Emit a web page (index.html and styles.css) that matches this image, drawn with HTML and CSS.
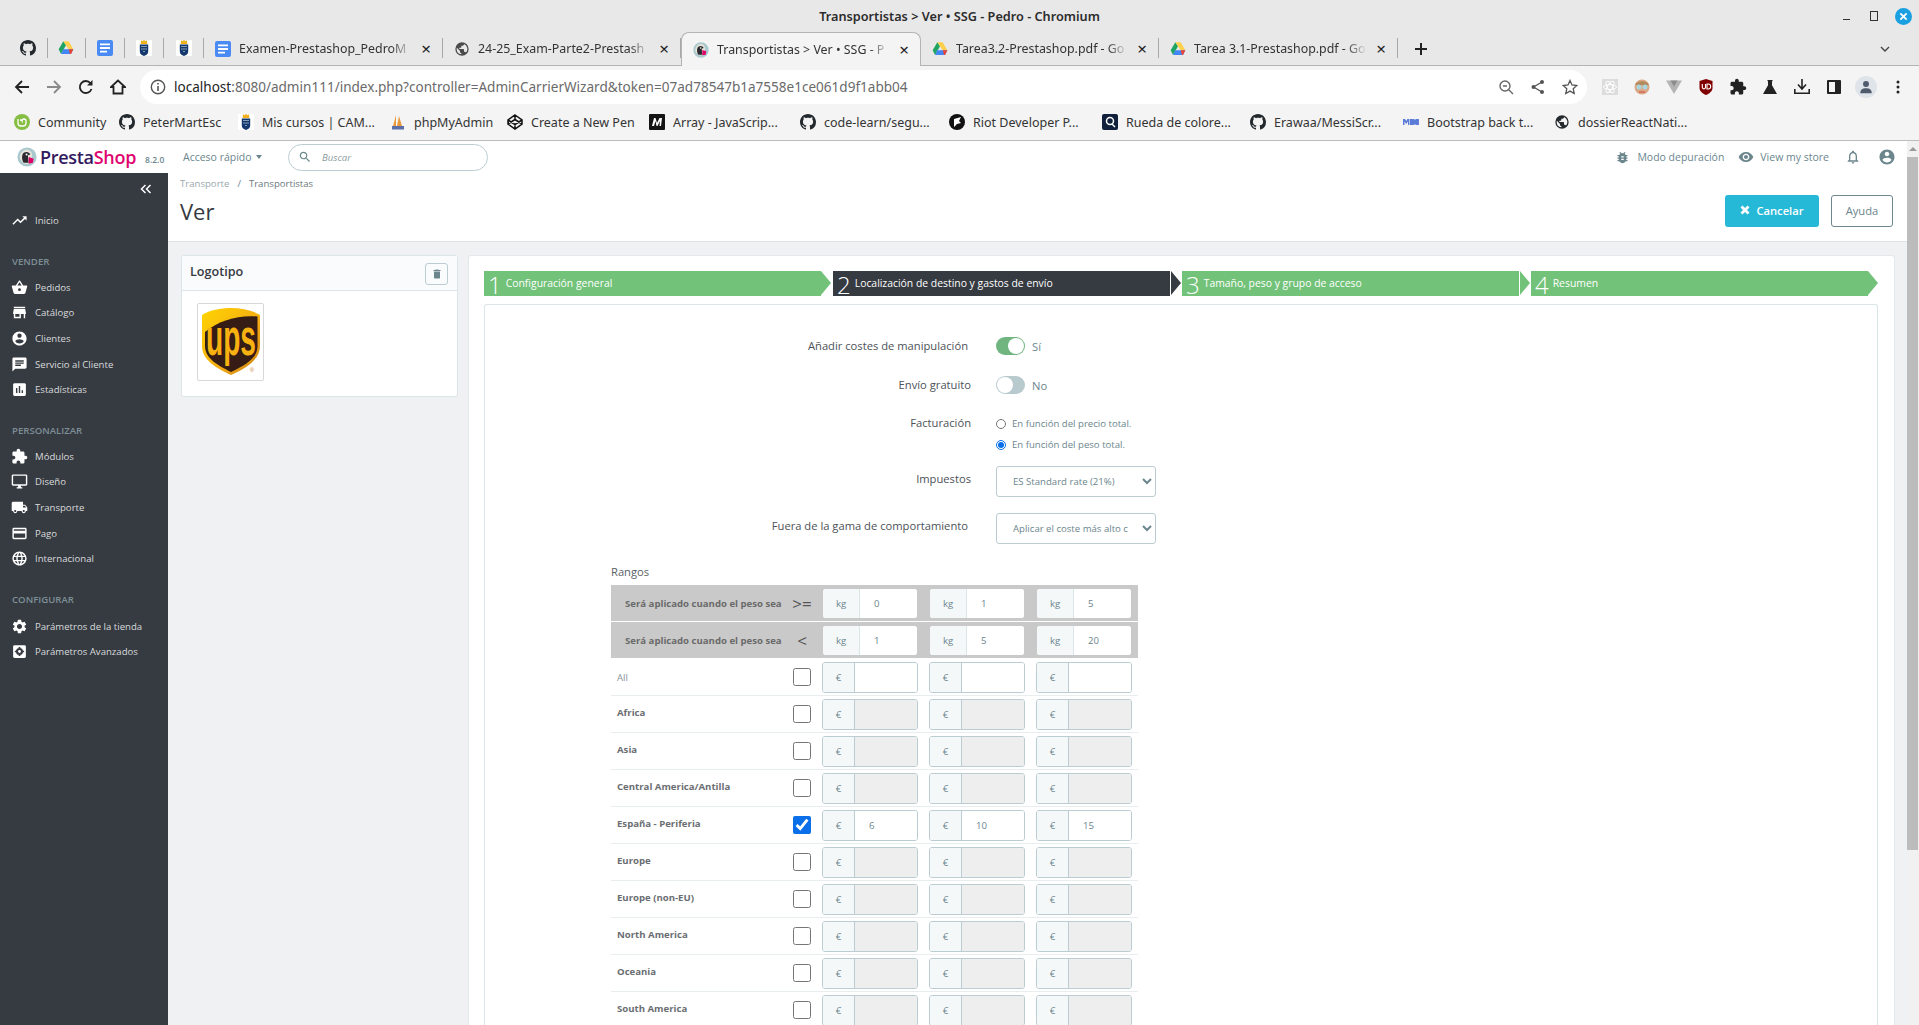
FILE: index.html
```html
<!DOCTYPE html>
<html lang="es">
<head>
    <meta charset="UTF-8">
    <title>Transportistas &gt; Ver • SSG - Pedro - Chromium</title>
    <link rel="stylesheet" href="styles.css">
</head>
<body>

<svg class="defs" xmlns="http://www.w3.org/2000/svg">
    <symbol id="i-github" viewBox="0 0 16 16"><path fill="currentColor" d="M8 0C3.58 0 0 3.58 0 8c0 3.54 2.29 6.53 5.47 7.59.4.07.55-.17.55-.38 0-.19-.01-.82-.01-1.49-2.01.37-2.53-.49-2.69-.94-.09-.23-.48-.94-.82-1.13-.28-.15-.68-.52-.01-.53.63-.01 1.08.58 1.23.82.72 1.21 1.87.87 2.33.66.07-.52.28-.87.51-1.07-1.78-.2-3.64-.89-3.64-3.95 0-.87.31-1.59.82-2.15-.08-.2-.36-1.02.08-2.12 0 0 .67-.21 2.2.82.64-.18 1.32-.27 2-.27.68 0 1.36.09 2 .27 1.53-1.04 2.2-.82 2.2-.82.44 1.1.16 1.92.08 2.12.51.56.82 1.27.82 2.15 0 3.07-1.87 3.75-3.65 3.95.29.25.54.73.54 1.48 0 1.07-.01 1.93-.01 2.2 0 .21.15.46.55.38A8.013 8.013 0 0016 8c0-4.42-3.58-8-8-8z"/></symbol>
    <symbol id="i-drive" viewBox="0 0 24 22"><polygon fill="#1fa463" points="8,1 1,13 4.5,20 12,7"/><polygon fill="#ffd04b" points="8,1 16,1 23,13 16,13"/><polygon fill="#4285f4" points="8,13 23,13 19.5,20 4.5,20"/><polygon fill="#ea4335" points="19.5,20 23,13 16,13 18,20"/></symbol>
    <symbol id="i-docs" viewBox="0 0 16 16"><rect width="16" height="16" rx="2" fill="#4a8af4"/><path fill="#fff" d="M3 3.5h10v1.8H3zM3 7.1h10v1.8H3zM3 10.7h7v1.8H3z"/></symbol>
    <symbol id="i-crest" viewBox="0 0 16 16"><rect width="16" height="16" fill="#fff"/><path fill="#f2b01e" d="M5 0l1.2 1.2L8 0l1.8 1.2L11 0l.3 4H4.700z"/><path fill="#12386e" d="M3.800 4.500h8.400v7c0 2.500-2 3.800-4.200 4.500-2.200-.7-4.200-2-4.200-4.500z"/><path fill="#fff" d="M5.500 6h1v1h-1zM7.500 6h1v1h-1zM9.500 6h1v1h-1zM5.500 8.500h1v1h-1zM7.500 8.500h1v1h-1zM9.500 8.500h1v1h-1zM7.500 11h1v1h-1z"/></symbol>
    <symbol id="i-globe" viewBox="0 0 24 24"><path fill="currentColor" d="M12 2a10 10 0 100 20 10 10 0 000-20zm-1 17.900A8 8 0 014 12c0-.6.100-1.200.200-1.800L9 15v1c0 1.100.9 2 2 2v1.900zm6.900-2.500c-.3-.8-1-1.400-1.900-1.400h-1v-3c0-.6-.4-1-1-1H8v-2h2c.6 0 1-.4 1-1V7h2c1.100 0 2-.9 2-2v-.4a8 8 0 012.900 12.800z"/></symbol>
    <symbol id="i-presta" viewBox="0 0 24 24"><circle cx="12" cy="12" r="11.500" fill="#a9c9cf"/><path fill="#e9e4da" d="M12 3a9 9 0 00-8 12l4 5h8l2-9a7 7 0 00-6-8z"/><path fill="#2a2a30" d="M8 7c3-2 7-1 8 2l-3 1 1 9H8c-2-3-3-9 0-12z"/><path fill="#df0067" d="M14 12l6 2-1 5-5 1z"/><circle cx="11.500" cy="9" r="1.200" fill="#fff"/></symbol>
    <symbol id="m-trend" viewBox="0 0 24 24"><path fill="currentColor" d="M16 6l2.290 2.290-4.880 4.880-4-4L2 16.590 3.410 18l6-6 4 4 6.300-6.290L22 12V6z"/></symbol>
    <symbol id="m-basket" viewBox="0 0 24 24"><path fill="currentColor" d="M17.210 9l-4.380-6.560c-.19-.28-.51-.42-.83-.42-.32 0-.64.14-.83.43L6.790 9H2c-.55 0-1 .45-1 1 0 .09.01.18.04.27l2.540 9.270c.23.84 1 1.460 1.920 1.460h13c.92 0 1.690-.62 1.930-1.460l2.540-9.270L23 10c0-.55-.45-1-1-1h-4.790zM9 9l3-4.400L15 9H9zm3 8c-1.100 0-2-.9-2-2s.9-2 2-2 2 .9 2 2-.9 2-2 2z"/></symbol>
    <symbol id="m-store" viewBox="0 0 24 24"><path fill="currentColor" d="M20 4H4v2h16V4zm1 10v-2l-1-5H4l-1 5v2h1v6h10v-6h4v6h2v-6h1zm-9 4H6v-4h6v4z"/></symbol>
    <symbol id="m-account" viewBox="0 0 24 24"><path fill="currentColor" d="M12 2C6.480 2 2 6.480 2 12s4.480 10 10 10 10-4.480 10-10S17.520 2 12 2zm0 3c1.660 0 3 1.340 3 3s-1.340 3-3 3-3-1.340-3-3 1.340-3 3-3zm0 14.200c-2.500 0-4.710-1.280-6-3.220.03-1.990 4-3.080 6-3.080 1.990 0 5.970 1.090 6 3.080-1.290 1.940-3.500 3.220-6 3.220z"/></symbol>
    <symbol id="m-chat" viewBox="0 0 24 24"><path fill="currentColor" d="M20 2H4c-1.100 0-1.990.9-1.990 2L2 22l4-4h14c1.100 0 2-.9 2-2V4c0-1.100-.9-2-2-2zM6 9h12v2H6V9zm8 5H6v-2h8v2zm4-6H6V6h12v2z"/></symbol>
    <symbol id="m-stats" viewBox="0 0 24 24"><path fill="currentColor" d="M19 3H5c-1.100 0-2 .9-2 2v14c0 1.100.9 2 2 2h14c1.100 0 2-.9 2-2V5c0-1.100-.9-2-2-2zM9 17H7v-7h2v7zm4 0h-2V7h2v10zm4 0h-2v-4h2v4z"/></symbol>
    <symbol id="m-puzzle" viewBox="0 0 24 24"><path fill="currentColor" d="M20.500 11H19V7c0-1.100-.9-2-2-2h-4V3.500C13 2.120 11.880 1 10.500 1S8 2.120 8 3.500V5H4c-1.100 0-1.990.9-1.990 2v3.800H3.500c1.490 0 2.700 1.210 2.700 2.700s-1.210 2.700-2.700 2.700H2V20c0 1.100.9 2 2 2h3.800v-1.500c0-1.490 1.210-2.700 2.700-2.700 1.490 0 2.700 1.210 2.700 2.700V22H17c1.100 0 2-.9 2-2v-4h1.500c1.380 0 2.500-1.120 2.500-2.500S21.880 11 20.500 11z"/></symbol>
    <symbol id="m-desktop" viewBox="0 0 24 24"><path fill="currentColor" d="M21 2H3c-1.100 0-2 .9-2 2v12c0 1.100.9 2 2 2h7v2H8v2h8v-2h-2v-2h7c1.100 0 2-.9 2-2V4c0-1.100-.9-2-2-2zm0 14H3V4h18v12z"/></symbol>
    <symbol id="m-truck" viewBox="0 0 24 24"><path fill="currentColor" d="M20 8h-3V4H3c-1.100 0-2 .9-2 2v11h2c0 1.660 1.340 3 3 3s3-1.340 3-3h6c0 1.660 1.340 3 3 3s3-1.340 3-3h2v-5l-3-4zM6 18.500c-.83 0-1.500-.67-1.500-1.500s.67-1.500 1.500-1.500 1.500.67 1.500 1.500-.67 1.500-1.500 1.500zm13.500-9l1.960 2.500H17V9.500h2.500zm-1.500 9c-.83 0-1.500-.67-1.500-1.500s.67-1.500 1.500-1.500 1.500.67 1.500 1.500-.67 1.500-1.500 1.500z"/></symbol>
    <symbol id="m-card" viewBox="0 0 24 24"><path fill="currentColor" d="M20 4H4c-1.110 0-1.990.89-1.990 2L2 18c0 1.110.89 2 2 2h16c1.110 0 2-.89 2-2V6c0-1.110-.89-2-2-2zm0 14H4v-6h16v6zm0-10H4V6h16v2z"/></symbol>
    <symbol id="m-language" viewBox="0 0 24 24"><path fill="currentColor" d="M11.990 2C6.470 2 2 6.480 2 12s4.470 10 9.990 10C17.520 22 22 17.520 22 12S17.520 2 11.990 2zm6.930 6h-2.950c-.32-1.250-.78-2.450-1.380-3.560 1.840.63 3.370 1.910 4.330 3.560zM12 4.040c.83 1.200 1.480 2.530 1.910 3.960h-3.820c.43-1.430 1.080-2.760 1.910-3.960zM4.260 14C4.100 13.360 4 12.690 4 12s.1-1.360.26-2h3.380c-.08.66-.14 1.320-.14 2 0 .68.06 1.340.14 2H4.260zm.82 2h2.950c.32 1.250.78 2.450 1.380 3.560-1.840-.63-3.370-1.900-4.330-3.560zm2.950-8H5.080c.96-1.660 2.490-2.930 4.330-3.560C8.810 5.550 8.350 6.750 8.030 8zM12 19.960c-.83-1.200-1.480-2.530-1.910-3.960h3.820c-.43 1.430-1.080 2.760-1.910 3.960zM14.340 14H9.660c-.09-.66-.16-1.320-.16-2 0-.68.07-1.350.16-2h4.680c.09.65.16 1.320.16 2 0 .68-.07 1.340-.16 2zm.25 5.560c.6-1.110 1.060-2.310 1.380-3.560h2.950c-.96 1.650-2.490 2.930-4.330 3.560zM16.360 14c.08-.66.14-1.320.14-2 0-.68-.06-1.340-.14-2h3.380c.16.64.26 1.310.26 2s-.1 1.360-.26 2h-3.380z"/></symbol>
    <symbol id="m-gear" viewBox="0 0 24 24"><path fill="currentColor" d="M19.140 12.940c.04-.3.06-.61.06-.94 0-.32-.02-.64-.07-.94l2.030-1.580c.18-.14.23-.41.12-.61l-1.920-3.320c-.12-.22-.37-.29-.59-.22l-2.390.96c-.5-.38-1.030-.7-1.620-.94l-.36-2.540c-.04-.24-.24-.41-.48-.41h-3.840c-.24 0-.43.17-.47.41l-.36 2.540c-.59.24-1.130.57-1.620.94l-2.390-.96c-.22-.08-.47 0-.59.22L2.740 8.870c-.12.21-.08.47.12.61l2.030 1.580c-.05.3-.09.63-.09.94s.02.64.07.94l-2.030 1.580c-.18.14-.23.41-.12.61l1.920 3.320c.12.22.37.29.59.22l2.390-.96c.5.38 1.030.7 1.620.94l.36 2.540c.05.24.24.41.48.41h3.840c.24 0 .44-.17.47-.41l.36-2.540c.59-.24 1.130-.56 1.620-.94l2.390.96c.22.08.47 0 .59-.22l1.920-3.320c.12-.22.07-.47-.12-.61l-2.010-1.580zM12 15.600c-1.980 0-3.600-1.620-3.600-3.600s1.620-3.600 3.600-3.600 3.600 1.620 3.600 3.600-1.620 3.600-3.600 3.600z"/></symbol>
    <symbol id="m-gearbox" viewBox="0 0 24 24"><rect x="3" y="3" width="18" height="18" rx="2" fill="currentColor"/><circle cx="12" cy="12" r="5" fill="#363a41"/><circle cx="12" cy="12" r="2" fill="currentColor"/><path fill="#363a41" d="M10.800 5.500h2.400v2h-2.400zM10.800 16.500h2.400v2h-2.400zM5.500 10.800h2v2.400h-2zM16.500 10.800h2v2.400h-2z"/></symbol>
    <symbol id="m-search" viewBox="0 0 24 24"><path fill="currentColor" d="M15.500 14h-.79l-.28-.27C15.410 12.590 16 11.110 16 9.500 16 5.910 13.090 3 9.500 3S3 5.910 3 9.500 5.910 16 9.500 16c1.610 0 3.090-.59 4.230-1.570l.27.28v.79l5 4.990L20.490 19l-4.990-5zm-6 0C7.010 14 5 11.990 5 9.500S7.010 5 9.500 5 14 7.010 14 9.500 11.990 14 9.500 14z"/></symbol>
    <symbol id="m-delete" viewBox="0 0 24 24"><path fill="currentColor" d="M6 19c0 1.100.9 2 2 2h8c1.100 0 2-.9 2-2V7H6v12zM19 4h-3.500l-1-1h-5l-1 1H5v2h14V4z"/></symbol>
    <symbol id="m-bug" viewBox="0 0 24 24"><path fill="currentColor" d="M20 8h-2.810c-.45-.78-1.070-1.450-1.820-1.960L17 4.410 15.590 3l-2.170 2.170C12.960 5.060 12.490 5 12 5c-.49 0-.96.06-1.410.17L8.410 3 7 4.410l1.620 1.630C7.880 6.550 7.260 7.220 6.810 8H4v2h2.090c-.05.33-.09.66-.09 1v1H4v2h2v1c0 .34.04.67.09 1H4v2h2.810c1.040 1.790 2.970 3 5.190 3s4.150-1.210 5.190-3H20v-2h-2.090c.05-.33.09-.66.09-1v-1h2v-2h-2v-1c0-.34-.04-.67-.09-1H20V8zm-6 8h-4v-2h4v2zm0-4h-4v-2h4v2z"/></symbol>
    <symbol id="m-eye" viewBox="0 0 24 24"><path fill="currentColor" d="M12 4.500C7 4.500 2.730 7.610 1 12c1.730 4.390 6 7.500 11 7.500s9.270-3.110 11-7.500c-1.730-4.390-6-7.500-11-7.500zM12 17c-2.760 0-5-2.240-5-5s2.240-5 5-5 5 2.240 5 5-2.240 5-5 5zm0-8c-1.660 0-3 1.340-3 3s1.340 3 3 3 3-1.340 3-3-1.340-3-3-3z"/></symbol>
    <symbol id="m-bell" viewBox="0 0 24 24"><path fill="currentColor" d="M12 22c1.100 0 2-.9 2-2h-4c0 1.100.89 2 2 2zm6-6v-5c0-3.070-1.640-5.640-4.500-6.320V4c0-.83-.67-1.500-1.500-1.500s-1.500.67-1.500 1.500v.68C7.630 5.360 6 7.920 6 11v5l-2 2v1h16v-1l-2-2zm-2 1H8v-6c0-2.480 1.510-4.500 4-4.500s4 2.020 4 4.500v6z"/></symbol>
</svg>

<div class="titlebar">
    <span class="window-title">Transportistas &gt; Ver • SSG - Pedro - Chromium</span>
    <div class="window-btns">
        <span class="win-min"></span>
        <span class="win-max"></span>
        <span class="win-close">
            <svg viewBox="0 0 10 10" width="9" height="9"><path d="M1.500 1.500l7 7M8.500 1.500l-7 7" stroke="#fff" stroke-width="2"/></svg>
        </span>
    </div>
</div>

<div class="tabstrip">
    <div class="pin"><svg class="fav gh"><use href="#i-github"/></svg></div>
    <div class="pin"><svg class="fav"><use href="#i-drive"/></svg></div>
    <div class="pin"><svg class="fav"><use href="#i-docs"/></svg></div>
    <div class="pin"><svg class="fav"><use href="#i-crest"/></svg></div>
    <div class="pin"><svg class="fav"><use href="#i-crest"/></svg></div>
    <div class="tab"><svg class="fav"><use href="#i-docs"/></svg><span class="tab-title">Examen-Prestashop_PedroM</span><span class="tab-x">×</span></div>
    <div class="tab"><svg class="fav globe"><use href="#i-globe"/></svg><span class="tab-title">24-25_Exam-Parte2-Prestash</span><span class="tab-x">×</span></div>
    <div class="tab active"><svg class="fav"><use href="#i-presta"/></svg><span class="tab-title">Transportistas &gt; Ver • SSG - P</span><span class="tab-x">×</span></div>
    <div class="tab"><svg class="fav"><use href="#i-drive"/></svg><span class="tab-title">Tarea3.2-Prestashop.pdf - Go</span><span class="tab-x">×</span></div>
    <div class="tab"><svg class="fav"><use href="#i-drive"/></svg><span class="tab-title">Tarea 3.1-Prestashop.pdf - Go</span><span class="tab-x">×</span></div>
    <span class="new-tab">
        <svg viewBox="0 0 12 12" width="12" height="12"><path d="M6 0v12M0 6h12" stroke="#222" stroke-width="2"/></svg>
    </span>
    <span class="tab-list">
        <svg viewBox="0 0 10 6" width="10" height="6"><path d="M1 1l4 4 4-4" fill="none" stroke="#444" stroke-width="1.400"/></svg>
    </span>
</div>

<div class="toolbar">
    <span class="tool"><svg viewBox="0 0 16 16" width="16" height="16"><path d="M15 8H2M8 2L2 8l6 6" fill="none" stroke="#222" stroke-width="1.800"/></svg></span>
    <span class="tool"><svg viewBox="0 0 16 16" width="16" height="16"><path d="M1 8h13M8 2l6 6-6 6" fill="none" stroke="#8a8a8a" stroke-width="1.800"/></svg></span>
    <span class="tool"><svg viewBox="0 0 16 16" width="16" height="16"><path d="M13.500 10A6 6 0 1112.500 4.200" fill="none" stroke="#222" stroke-width="1.800"/><path d="M14.500 1v5.500H9z" fill="#222"/></svg></span>
    <span class="tool"><svg viewBox="0 0 16 16" width="16" height="16"><path d="M8 1.500L1 8h2.500v6.500h9V8H15z" fill="none" stroke="#222" stroke-width="1.800"/></svg></span>
    <div class="omnibox">
        <svg class="info" viewBox="0 0 16 16" width="16" height="16"><circle cx="8" cy="8" r="6.700" fill="none" stroke="#555" stroke-width="1.400"/><path d="M7.200 7h1.600v5H7.200zM7.200 4h1.600v1.600H7.200z" fill="#555"/></svg>
        <span class="url"><b>localhost</b>:8080/admin111/index.php?controller=AdminCarrierWizard&amp;token=07ad78547b1a7558e1ce061d9f1abb04</span>
        <span class="omni-icons">
            <svg viewBox="0 0 16 16" width="16" height="16"><circle cx="7" cy="7" r="5" fill="none" stroke="#666" stroke-width="1.400"/><path d="M10.500 10.500L15 15M5 7h4" stroke="#666" stroke-width="1.400"/></svg>
            <svg viewBox="0 0 16 16" width="16" height="16"><circle cx="12" cy="3" r="2" fill="#555"/><circle cx="12" cy="13" r="2" fill="#555"/><circle cx="3.500" cy="8" r="2" fill="#555"/><path d="M12 3L3.500 8l8.500 5" fill="none" stroke="#555" stroke-width="1.300"/></svg>
            <svg viewBox="0 0 16 16" width="16" height="16"><path d="M8 1.500l2 4.500 4.800.5-3.600 3.200 1 4.800L8 12.100l-4.200 2.400 1-4.800L1.200 6.500 6 6z" fill="none" stroke="#555" stroke-width="1.300"/></svg>
        </span>
    </div>
    <div class="extensions">
        <span class="tool"><svg viewBox="0 0 16 16" width="16" height="16"><rect width="16" height="16" fill="#dcdcdc"/><g fill="none" stroke="#fff" stroke-width="1"><ellipse cx="8" cy="8" rx="6.500" ry="2.500"/><ellipse cx="8" cy="8" rx="6.500" ry="2.500" transform="rotate(60 8 8)"/><ellipse cx="8" cy="8" rx="6.500" ry="2.500" transform="rotate(120 8 8)"/></g></svg></span>
        <span class="tool"><svg viewBox="0 0 16 16" width="16" height="16"><circle cx="8" cy="8" r="7.500" fill="#d9a987"/><path d="M1 6c2-5 12-5 14 0z" fill="#b08a5c"/><circle cx="5" cy="8" r="2.500" fill="#a9d6dc"/><circle cx="11" cy="8" r="2.500" fill="#a9d6dc"/><path d="M5 13h6" stroke="#d96a5a" stroke-width="1.500"/></svg></span>
        <span class="tool"><svg viewBox="0 0 16 16" width="16" height="16"><path d="M0 1.500h16L8 15z" fill="#b4b4b4"/><path d="M4.500 1.500h7L8 7.500z" fill="#8c8c8c"/></svg></span>
        <span class="tool"><svg viewBox="0 0 16 16" width="16" height="16"><path d="M8 0l6.500 2v7c0 3-3 5.500-6.500 7-3.500-1.500-6.500-4-6.500-7V2z" fill="#800000"/><path d="M4.300 5v3.300a1.600 1.600 0 003.200 0V5M9 5v5h1.200a2.500 2.500 0 000-5z" fill="none" stroke="#fff" stroke-width="1.100"/></svg></span>
        <span class="tool"><svg width="18" height="18" class="dark-ico"><use href="#m-puzzle"/></svg></span>
        <span class="tool"><svg viewBox="0 0 16 16" width="16" height="16"><path d="M5.500 1h5v1.200H10v4l5 8.800H1l5-8.800V2.200h-.5z" fill="#222"/></svg></span>
        <span class="tool"><svg viewBox="0 0 16 16" width="16" height="16"><path d="M8 0v9M4 5.500L8 10l4-4.500" fill="none" stroke="#222" stroke-width="1.600"/><path d="M.8 10v4.200h14.400V10" fill="none" stroke="#222" stroke-width="1.600"/></svg></span>
        <span class="tool"><svg viewBox="0 0 14 14" width="14" height="14"><rect width="14" height="14" rx="1" fill="#222"/><rect x="2" y="2" width="6" height="10" fill="#f4f4f4"/></svg></span>
        <span class="tool"><span class="avatar"><svg viewBox="0 0 16 16" width="14" height="14"><circle cx="8" cy="4.500" r="3.400" fill="#4f5b6d"/><path d="M1.500 15c0-4 2.800-5.500 6.500-5.500s6.500 1.500 6.500 5.500z" fill="#4f5b6d"/></svg></span></span>
        <span class="tool"><svg viewBox="0 0 4 14" width="4" height="14"><circle cx="2" cy="2" r="1.500" fill="#222"/><circle cx="2" cy="7" r="1.500" fill="#222"/><circle cx="2" cy="12" r="1.500" fill="#222"/></svg></span>
    </div>
</div>

<div class="bookmarks">
    <a><svg class="fav" viewBox="0 0 16 16"><circle cx="8" cy="8" r="8" fill="#86be43"/><path d="M4 5v4a3 3 0 003 3h2a3 3 0 003-3V7a2 2 0 00-4 0 2 2 0 00-2-1" fill="none" stroke="#fff" stroke-width="1.300"/></svg>Community</a>
    <a><svg class="fav gh"><use href="#i-github"/></svg>PeterMartEsc</a>
    <a><svg class="fav"><use href="#i-crest"/></svg>Mis cursos | CAM...</a>
    <a><svg class="fav" viewBox="0 0 16 16"><path d="M3 12L6 1v11zM7 12l2-10 3 10z" fill="#e9983c"/><path d="M2 12h12v3.500H2z" fill="#5a6fa8"/></svg>phpMyAdmin</a>
    <a><svg class="fav" viewBox="0 0 16 16"><path d="M8 1l7 5v4l-7 5-7-5V6zM8 1v4.500M8 15v-4.500M1 6l7 4.500L15 6M1 10l7-4.500 7 4.500" fill="none" stroke="#111" stroke-width="1.500"/></svg>Create a New Pen</a>
    <a><svg class="fav" viewBox="0 0 16 16"><rect width="16" height="16" rx="1" fill="#151515"/><path d="M3 12l2-8h1.500L8 9l2.500-5H13l-1 8h-1.500l.5-5-2.500 5h-1L6.500 7 5 12z" fill="#fff"/></svg>Array - JavaScrip...</a>
    <a><svg class="fav gh"><use href="#i-github"/></svg>code-learn/segu...</a>
    <a><svg class="fav" viewBox="0 0 16 16"><circle cx="8" cy="8" r="8" fill="#111"/><path d="M5 13V5l7-2-2 4 2 2-4 1z" fill="#fff"/></svg>Riot Developer P...</a>
    <a><svg class="fav" viewBox="0 0 16 16"><rect width="16" height="16" rx="2" fill="#10203a"/><circle cx="8" cy="7" r="3.500" fill="none" stroke="#fff" stroke-width="1.500"/><path d="M10 10l3 3" stroke="#fff" stroke-width="1.500"/></svg>Rueda de colore...</a>
    <a><svg class="fav gh"><use href="#i-github"/></svg>Erawaa/MessiScr...</a>
    <a><svg class="fav" viewBox="0 0 16 16"><path d="M0 5h2l1.200 2L4.400 5h2v6H5V7.500L3.200 10 1.500 7.500V11H0zM7 5h3a3 3 0 010 6H7zM12.500 5h2.700a1.500 1.500 0 010 3 1.500 1.500 0 010 3h-2.700z" fill="#5a7bd8"/></svg>Bootstrap back t...</a>
    <a><svg class="fav gh"><use href="#i-globe"/></svg>dossierReactNati...</a>
</div>

<div class="app">
    <div class="page">
        <header class="topbar">
            <div class="brand">
                <svg class="brand-mark"><use href="#i-presta"/></svg>
                <span class="brand-name">Presta<em>Shop</em></span>
                <span class="brand-version">8.2.0</span>
            </div>
            <span class="quick">Acceso rápido <i class="caret"></i></span>
            <div class="search">
                <svg width="14" height="14"><use href="#m-search"/></svg>
                <span>Buscar</span>
            </div>
            <div class="top-right">
                <span class="top-link"><svg width="15" height="15"><use href="#m-bug"/></svg>Modo depuración</span>
                <span class="top-link eye"><svg width="16" height="16"><use href="#m-eye"/></svg>View my store</span>
                <svg class="bell" width="16" height="18"><use href="#m-bell"/></svg>
                <svg class="user" width="18" height="18"><use href="#m-account"/></svg>
            </div>
        </header>

        <div class="below">
            <nav class="sidebar">
                <div class="collapse">
                    <svg viewBox="0 0 12 10" width="12" height="10"><path d="M5.500 1L1.500 5l4 4M10.500 1L6.500 5l4 4" fill="none" stroke="#fff" stroke-width="1.500"/></svg>
                </div>
                <a class="nav-item"><svg><use href="#m-trend"/></svg>Inicio</a>
                <div class="nav-head">VENDER</div>
                <a class="nav-item"><svg><use href="#m-basket"/></svg>Pedidos</a>
                <a class="nav-item"><svg><use href="#m-store"/></svg>Catálogo</a>
                <a class="nav-item"><svg><use href="#m-account"/></svg>Clientes</a>
                <a class="nav-item"><svg><use href="#m-chat"/></svg>Servicio al Cliente</a>
                <a class="nav-item"><svg><use href="#m-stats"/></svg>Estadísticas</a>
                <div class="nav-head">PERSONALIZAR</div>
                <a class="nav-item"><svg><use href="#m-puzzle"/></svg>Módulos</a>
                <a class="nav-item"><svg><use href="#m-desktop"/></svg>Diseño</a>
                <a class="nav-item"><svg><use href="#m-truck"/></svg>Transporte</a>
                <a class="nav-item"><svg><use href="#m-card"/></svg>Pago</a>
                <a class="nav-item"><svg><use href="#m-language"/></svg>Internacional</a>
                <div class="nav-head nav-head-last">CONFIGURAR</div>
                <a class="nav-item"><svg><use href="#m-gear"/></svg>Parámetros de la tienda</a>
                <a class="nav-item"><svg><use href="#m-gearbox"/></svg>Parámetros Avanzados</a>
            </nav>

            <main class="content">
                <div class="page-head">
                    <div>
                        <div class="breadcrumb"><span>Transporte</span><i>/</i><strong>Transportistas</strong></div>
                        <h1>Ver</h1>
                    </div>
                    <div class="head-btns">
                        <a class="btn btn-cancel">
                            <svg viewBox="0 0 10 10" width="10" height="10"><path d="M1.500 1.500l7 7M8.500 1.500l-7 7" stroke="#fff" stroke-width="2.800"/></svg>
                            Cancelar
                        </a>
                        <a class="btn btn-help">Ayuda</a>
                    </div>
                </div>

                <div class="content-body">
                    <section class="logo-panel">
                        <div class="logo-head">
                            <span class="logo-title">Logotipo</span>
                            <span class="trash"><svg width="12" height="12"><use href="#m-delete"/></svg></span>
                        </div>
                        <div class="logo-body">
                            <div class="logo-frame">
                                <svg viewBox="0 0 58 68" width="58" height="68">
                                    <defs>
                                        <linearGradient id="ups-gold" x1="0" y1="0" x2="1" y2="1">
                                            <stop offset="0" stop-color="#ffd500"/>
                                            <stop offset="0.6" stop-color="#f5ab14"/>
                                            <stop offset="1" stop-color="#c77f12"/>
                                        </linearGradient>
                                    </defs>
                                    <path d="M29 0C18 0 8 2 0 7v31c0 14 14 22 29 29 15-7 29-15 29-29V7C50 2 40 0 29 0z" fill="url(#ups-gold)"/>
                                    <path d="M55.500 8.500V38c0 12-12 19-26.500 26C15 57 3 50 3 38V24C18 12 36 7 55.500 8.500z" fill="#351c15"/>
                                    <text class="ups-word" x="29" y="47" text-anchor="middle" textLength="50" lengthAdjust="spacingAndGlyphs">ups</text>
                                    <text class="ups-reg" x="50" y="64" text-anchor="middle">®</text>
                                </svg>
                            </div>
                        </div>
                    </section>

                    <section class="wizard-panel">
                        <div class="steps">
                            <div class="step"><b>1</b>Configuración general</div>
                            <div class="step current"><b>2</b>Localización de destino y gastos de envío</div>
                            <div class="step"><b>3</b>Tamaño, peso y grupo de acceso</div>
                            <div class="step"><b>4</b>Resumen</div>
                        </div>

                        <div class="form-panel">
                            <div class="form-row toggle-row">
                                <label class="lbl lbl-in">Añadir costes de manipulación</label>
                                <span class="switch on"></span>
                                <span class="switch-text">Sí</span>
                            </div>
                            <div class="form-row toggle-row">
                                <label class="lbl">Envío gratuito</label>
                                <span class="switch"></span>
                                <span class="switch-text">No</span>
                            </div>
                            <div class="form-row radio-row">
                                <label class="lbl">Facturación</label>
                                <div class="radios">
                                    <label><input type="radio" name="billing">En función del precio total.</label>
                                    <label><input type="radio" name="billing" checked>En función del peso total.</label>
                                </div>
                            </div>
                            <div class="form-row select-row">
                                <label class="lbl">Impuestos</label>
                                <select><option>ES Standard rate (21%)</option></select>
                            </div>
                            <div class="form-row select-row">
                                <label class="lbl lbl-in">Fuera de la gama de comportamiento</label>
                                <select><option>Aplicar el coste más alto c</option></select>
                            </div>

                            <div class="ranges">
                                <div class="ranges-title">Rangos</div>

                                <div class="range-head">
                                    <span class="range-text">Será aplicado cuando el peso sea</span>
                                    <span class="range-op">&gt;=</span>
                                    <div class="group"><span>kg</span><input value="0"></div>
                                    <div class="group"><span>kg</span><input value="1"></div>
                                    <div class="group"><span>kg</span><input value="5"></div>
                                </div>
                                <div class="range-head">
                                    <span class="range-text">Será aplicado cuando el peso sea</span>
                                    <span class="range-op">&lt;</span>
                                    <div class="group"><span>kg</span><input value="1"></div>
                                    <div class="group"><span>kg</span><input value="5"></div>
                                    <div class="group"><span>kg</span><input value="20"></div>
                                </div>

                                <div class="zone all">
                                    <span class="zone-name">All</span><input type="checkbox">
                                    <div class="group"><span>€</span><input></div>
                                    <div class="group"><span>€</span><input></div>
                                    <div class="group"><span>€</span><input></div>
                                </div>
                                <div class="zone">
                                    <span class="zone-name">Africa</span><input type="checkbox">
                                    <div class="group"><span>€</span><input disabled></div>
                                    <div class="group"><span>€</span><input disabled></div>
                                    <div class="group"><span>€</span><input disabled></div>
                                </div>
                                <div class="zone">
                                    <span class="zone-name">Asia</span><input type="checkbox">
                                    <div class="group"><span>€</span><input disabled></div>
                                    <div class="group"><span>€</span><input disabled></div>
                                    <div class="group"><span>€</span><input disabled></div>
                                </div>
                                <div class="zone">
                                    <span class="zone-name">Central America/Antilla</span><input type="checkbox">
                                    <div class="group"><span>€</span><input disabled></div>
                                    <div class="group"><span>€</span><input disabled></div>
                                    <div class="group"><span>€</span><input disabled></div>
                                </div>
                                <div class="zone">
                                    <span class="zone-name">España - Periferia</span><input type="checkbox" checked>
                                    <div class="group"><span>€</span><input value="6"></div>
                                    <div class="group"><span>€</span><input value="10"></div>
                                    <div class="group"><span>€</span><input value="15"></div>
                                </div>
                                <div class="zone">
                                    <span class="zone-name">Europe</span><input type="checkbox">
                                    <div class="group"><span>€</span><input disabled></div>
                                    <div class="group"><span>€</span><input disabled></div>
                                    <div class="group"><span>€</span><input disabled></div>
                                </div>
                                <div class="zone">
                                    <span class="zone-name">Europe (non-EU)</span><input type="checkbox">
                                    <div class="group"><span>€</span><input disabled></div>
                                    <div class="group"><span>€</span><input disabled></div>
                                    <div class="group"><span>€</span><input disabled></div>
                                </div>
                                <div class="zone">
                                    <span class="zone-name">North America</span><input type="checkbox">
                                    <div class="group"><span>€</span><input disabled></div>
                                    <div class="group"><span>€</span><input disabled></div>
                                    <div class="group"><span>€</span><input disabled></div>
                                </div>
                                <div class="zone">
                                    <span class="zone-name">Oceania</span><input type="checkbox">
                                    <div class="group"><span>€</span><input disabled></div>
                                    <div class="group"><span>€</span><input disabled></div>
                                    <div class="group"><span>€</span><input disabled></div>
                                </div>
                                <div class="zone">
                                    <span class="zone-name">South America</span><input type="checkbox">
                                    <div class="group"><span>€</span><input disabled></div>
                                    <div class="group"><span>€</span><input disabled></div>
                                    <div class="group"><span>€</span><input disabled></div>
                                </div>
                            </div>
                        </div>
                    </section>
                </div>
            </main>
        </div>
    </div>

    <div class="scrollbar">
        <i class="scroll-up"></i>
        <div class="scroll-thumb"></div>
    </div>
</div>

</body>
</html>
```

FILE: styles.css
```css
* {
    box-sizing: border-box;
}
html, body {
    height: 100%;
}
body {
    margin: 0;
    height: 1025px;
    overflow: hidden;
    display: flex;
    flex-direction: column;
    font-family: "Open Sans", sans-serif;
    color: #363a41;
    background: #fff;
}
.defs {
    display: none;
}
svg {
    display: block;
    flex: none;
}

/* browser frame */
.titlebar {
    height: 32px;
    flex: none;
    background: #e8e8e8;
    display: flex;
    align-items: center;
    justify-content: center;
    position: relative;
}
.window-title {
    font-family: "Noto Sans", sans-serif;
    font-size: 12.700px;
    font-weight: 600;
    color: #2c2c2c;
}
.window-btns {
    position: absolute;
    top: 0;
    right: 0;
    height: 32px;
    width: 80px;
}
.window-btns span {
    position: absolute;
}
.win-min {
    left: 4px;
    top: 19px;
    width: 7px;
    height: 1px;
    background: #333;
}
.win-max {
    left: 31px;
    top: 11px;
    width: 8px;
    height: 10px;
    border: 1px solid #333;
}
.win-close {
    left: 56px;
    top: 8px;
    width: 17px;
    height: 17px;
    border-radius: 50%;
    background: #1a9fe0;
    display: flex;
    align-items: center;
    justify-content: center;
}

.tabstrip {
    height: 34px;
    flex: none;
    display: grid;
    grid-template-columns: 48px 38px 39px 39px 40px 239px 238px 240px 238px 239px 46px 1fr 39px;
    background: #e8e8e8;
    border-bottom: 1px solid #b4b4b4;
    font-family: "Noto Sans", sans-serif;
    font-size: 12.400px;
    color: #333;
}
.fav {
    width: 16px;
    height: 16px;
}
.gh {
    color: #24292e;
}
.globe {
    color: #4a4a4a;
}
.pin {
    display: flex;
    align-items: center;
    justify-content: flex-end;
    padding-right: 11px;
    margin: 6px 0 7px;
    border-right: 1px solid #a8a8a8;
}
.tab {
    position: relative;
    display: flex;
    align-items: center;
    padding: 0 11px;
    gap: 8px;
}
.tab::after {
    content: "";
    position: absolute;
    right: 0;
    top: 6px;
    bottom: 7px;
    width: 1px;
    background: #a8a8a8;
}
.tab.active {
    background: #f4f4f4;
    border: 1px solid #b4b4b4;
    border-bottom: 0;
    border-radius: 8px 8px 0 0;
    height: 34px;
    margin: 0 0 -1px;
    padding: 0 10px 0 11px;
    z-index: 1;
}
.tab.active::after {
    display: none;
}
.tab-title {
    flex: 1;
    min-width: 0;
    white-space: nowrap;
    overflow: hidden;
    mask-image: linear-gradient(to right, #000 88%, transparent);
}
.tab-x {
    flex: none;
    width: 12px;
    text-align: center;
    font-size: 17px;
    line-height: 17px;
    color: #222;
}
.new-tab {
    display: flex;
    align-items: center;
    padding-left: 17px;
}
.tab-list {
    grid-column: 13;
    display: flex;
    align-items: center;
}

.toolbar {
    height: 39px;
    flex: none;
    display: flex;
    padding: 4px 0 0 6px;
    background: #f4f4f4;
}
.tool {
    width: 32px;
    height: 34px;
    flex: none;
    display: flex;
    align-items: center;
    justify-content: center;
}
.omnibox {
    width: 1447px;
    height: 34px;
    margin-left: 6px;
    padding: 0 9px 0 10px;
    flex: none;
    display: flex;
    align-items: center;
    background: #fff;
    border-radius: 17px;
    font-family: "Noto Sans", sans-serif;
}
.url {
    margin-left: 8px;
    font-size: 13.550px;
    color: #6a6a6a;
    white-space: nowrap;
}
.url b {
    font-weight: 400;
    color: #222;
}
.omni-icons {
    margin-left: auto;
    display: flex;
    gap: 16px;
}
.extensions {
    margin-left: 7px;
    display: flex;
}
.dark-ico {
    color: #222;
}
.avatar {
    width: 22px;
    height: 22px;
    border-radius: 50%;
    background: #dfe3ea;
    display: flex;
    align-items: center;
    justify-content: center;
}

.bookmarks {
    height: 36px;
    flex: none;
    display: grid;
    grid-template-columns: 105px 119px 152px 117px 142px 151px 149px 153px 148px 153px 151px 1fr;
    align-items: center;
    padding: 0 0 1px 14px;
    background: #f4f4f4;
    border-bottom: 1px solid #bdbdbd;
    font-family: "Noto Sans", sans-serif;
    font-size: 12.500px;
    color: #333;
}
.bookmarks a {
    display: flex;
    align-items: center;
    gap: 8px;
    white-space: nowrap;
}

/* app */
.app {
    flex: 1;
    min-height: 0;
    display: flex;
}
.page {
    flex: 1;
    min-width: 0;
    display: flex;
    flex-direction: column;
}
.scrollbar {
    width: 12px;
    flex: none;
    position: relative;
    background: #f1f1f1;
}
.scroll-up {
    position: absolute;
    left: 2px;
    top: 6px;
    border: 4px solid transparent;
    border-top: 0;
    border-bottom: 4px solid #9a9a9a;
}
.scroll-thumb {
    position: absolute;
    left: 0;
    right: 1px;
    top: 16px;
    height: 693px;
    background: #bcbcbc;
}

.topbar {
    height: 32px;
    flex: none;
    display: flex;
    align-items: center;
    background: #fff;
}
.brand {
    display: flex;
    align-items: center;
    padding-left: 17px;
    width: 183px;
}
.brand-mark {
    width: 20px;
    height: 20px;
}
.brand-name {
    margin-left: 3px;
    font-size: 18px;
    font-weight: 600;
    letter-spacing: -0.3px;
    color: #33195e;
}
.brand-name em {
    font-style: normal;
    color: #e0036f;
}
.brand-version {
    margin: 5px 0 0 9px;
    font-size: 8.500px;
    font-weight: 600;
    color: #6c868e;
}
.quick {
    width: 105px;
    font-size: 10.500px;
    color: #6c868e;
    display: flex;
    align-items: center;
    gap: 4px;
}
.caret {
    border: 3.500px solid transparent;
    border-top: 4px solid #6c868e;
    border-bottom: 0;
}
.search {
    width: 200px;
    height: 27px;
    padding-left: 9px;
    display: flex;
    align-items: center;
    gap: 10px;
    border: 1px solid #bbcdd2;
    border-radius: 14px;
    color: #6c868e;
    font-size: 9.600px;
    font-style: italic;
}
.search span {
    color: #8a9ba0;
}
.top-right {
    margin-left: auto;
    display: flex;
    align-items: center;
    font-size: 10.500px;
    color: #6c868e;
}
.top-link {
    display: flex;
    align-items: center;
    gap: 7px;
}
.top-link.eye {
    margin-left: 14px;
    gap: 6px;
}
.bell {
    margin-left: 16px;
}
.user {
    margin: 0 11px 0 17px;
}

.below {
    flex: 1;
    min-height: 0;
    display: flex;
}
.sidebar {
    width: 168px;
    flex: none;
    background: #363a41;
    color: #fff;
}
.collapse {
    height: 35px;
    display: flex;
    justify-content: flex-end;
    align-items: flex-start;
    padding: 11px 16px 0 0;
}
.nav-item {
    height: 25.600px;
    display: flex;
    align-items: center;
    gap: 7px;
    padding-left: 11px;
    font-size: 9.600px;
    color: #d8dadc;
}
.nav-item svg {
    width: 17px;
    height: 17px;
    color: #fff;
}
.nav-head {
    height: 41px;
    padding: 22px 0 0 12px;
    font-size: 9.600px;
    line-height: 12px;
    font-weight: 600;
    color: #7d8f96;
}
.nav-head-last {
    height: 42px;
}

.content {
    flex: 1;
    min-width: 0;
    display: flex;
    flex-direction: column;
    background: #eff1f2;
}
.page-head {
    height: 69px;
    flex: none;
    display: flex;
    justify-content: space-between;
    padding: 0 14px 0 12px;
    background: #fff;
    border-bottom: 1px solid #dfe3e6;
}
.breadcrumb {
    display: flex;
    height: 20px;
    align-items: center;
    font-size: 9.600px;
    color: #9aa8ad;
}
.breadcrumb i {
    font-style: normal;
    margin: 0 8px;
    color: #6c868e;
}
.breadcrumb strong {
    font-weight: 400;
    color: #6c7a80;
}
h1 {
    margin: 3px 0 0;
    font-size: 22px;
    line-height: 30px;
    font-weight: 400;
    color: #363a41;
}
.head-btns {
    display: flex;
    gap: 12px;
    padding-top: 22px;
}
.btn {
    height: 32px;
    padding-bottom: 2px;
    display: flex;
    align-items: center;
    justify-content: center;
    gap: 6px;
    border-radius: 3px;
    font-size: 11.200px;
}
.btn-cancel {
    width: 94px;
    background: #25b9d7;
    color: #fff;
    font-weight: 600;
}
.btn-help {
    width: 62px;
    border: 1px solid #6c868e;
    color: #6c868e;
}

.content-body {
    flex: 1;
    min-height: 0;
    display: flex;
    align-items: flex-start;
    gap: 10px;
    padding: 13px 12px 0 13px;
    overflow: hidden;
}
.logo-panel {
    width: 277px;
    flex: none;
    background: #fff;
    border: 1px solid #dbe6e9;
    border-radius: 3px;
}
.logo-head {
    height: 35px;
    display: flex;
    align-items: center;
    justify-content: space-between;
    padding: 0 9px 0 8px;
    background: #fafbfc;
    border-bottom: 1px solid #dbe6e9;
    font-size: 12.600px;
    font-weight: 600;
    color: #363a41;
}
.logo-title {
    padding-bottom: 3px;
}
.trash {
    width: 23px;
    height: 22px;
    margin-top: 1px;
    display: flex;
    align-items: center;
    justify-content: center;
    border: 1px solid #bbcdd2;
    border-radius: 3px;
    color: #6c868e;
}
.logo-body {
    padding: 12px 15px 15px;
}
.logo-frame {
    width: 67px;
    height: 78px;
    display: flex;
    align-items: center;
    justify-content: center;
    border: 1px solid #d8d8d8;
    border-radius: 2px;
}
.ups-word {
    font-family: "Liberation Sans", sans-serif;
    font-size: 52px;
    font-weight: 700;
    fill: #f7b211;
}
.ups-reg {
    font-family: "Liberation Sans", sans-serif;
    font-size: 6px;
    fill: #c8862c;
}

.wizard-panel {
    flex: 1;
    min-width: 0;
    height: 900px;
    padding: 15px 16px 0 15px;
    background: #fff;
    border: 1px solid #e3e9eb;
    border-bottom: 0;
    border-radius: 3px 3px 0 0;
}
.steps {
    display: grid;
    grid-template-columns: repeat(4, 349px);
}
.step {
    position: relative;
    width: 337px;
    height: 25px;
    padding: 0 0 2px 4px;
    display: flex;
    align-items: center;
    gap: 4px;
    background: #72c279;
    color: #fff;
    font-size: 10.400px;
}
.step b {
    font-size: 24px;
    font-weight: 300;
    line-height: 25px;
    margin-bottom: -2px;
    padding-top: 2px;
}
.step::after {
    content: "";
    position: absolute;
    left: 338px;
    top: 0;
    border-left: 10px solid #72c279;
    border-top: 12.500px solid transparent;
    border-bottom: 12.500px solid transparent;
}
.step:first-child::after,
.step:last-child::after {
    left: 337px;
}
.step.current {
    background: #363a41;
}
.step.current::after {
    border-left-color: #363a41;
}

.form-panel {
    margin-top: 8px;
    height: 800px;
    padding-top: 32px;
    border: 1px solid #dbe6e9;
    border-bottom: 0;
    border-radius: 3px 3px 0 0;
    font-size: 11.200px;
}
.form-row {
    display: flex;
}
.lbl {
    width: 486px;
    margin-right: 25px;
    text-align: right;
    color: #4d5258;
}
.lbl-in {
    padding-right: 3px;
}
.toggle-row {
    height: 18px;
    margin-bottom: 21px;
    align-items: center;
}
.toggle-row .lbl {
    margin-top: -2px;
}
.switch {
    position: relative;
    width: 29px;
    height: 18px;
    border-radius: 9px;
    background: #b9cacf;
}
.switch::after {
    content: "";
    position: absolute;
    left: 1px;
    top: 1px;
    width: 16px;
    height: 16px;
    border-radius: 50%;
    background: #fff;
}
.switch.on {
    background: #70b580;
}
.switch.on::after {
    left: 12px;
}
.switch-text {
    margin-left: 7px;
    color: #6c868e;
}
.radio-row {
    height: 51px;
}
.radio-row .lbl {
    line-height: 15px;
}
.radios {
    margin-top: -2px;
    font-size: 9.600px;
    color: #6c868e;
}
.radios label {
    height: 21px;
    display: flex;
    align-items: center;
    gap: 6px;
}
.radios input {
    width: 10px;
    height: 10px;
    margin: 0;
    accent-color: #0a6fe8;
}
.select-row {
    height: 31px;
    margin-bottom: 16px;
    align-items: center;
}
.select-row .lbl {
    margin-top: -6px;
}
select {
    width: 160px;
    height: 31px;
    padding: 0 9px 0 12px;
    background: #fff;
    border: 1px solid #bbcdd2;
    border-radius: 3px;
    font-family: "Open Sans", sans-serif;
    font-size: 9.600px;
    color: #6c868e;
}

.ranges {
    width: 527px;
    margin: 20px 0 0 126px;
}
.ranges-title {
    height: 21px;
    font-size: 11.200px;
    color: #5b6166;
}
.range-head {
    height: 36px;
    margin-bottom: 1px;
    display: flex;
    align-items: center;
    padding-left: 14px;
    gap: 13px;
    background: #c9c9c9;
}
.range-text {
    width: 156px;
    margin-right: -13px;
    font-size: 9.600px;
    font-weight: 700;
    color: #6a6a6a;
    white-space: nowrap;
}
.range-op {
    width: 42px;
    margin-right: -13px;
    text-align: center;
    font-size: 17px;
    line-height: 1;
    color: #555;
}
.group {
    width: 94px;
    height: 29px;
    flex: none;
    display: flex;
    border-radius: 3px;
    overflow: hidden;
    background: #fff;
}
.group span {
    width: 37px;
    flex: none;
    display: flex;
    align-items: center;
    justify-content: center;
    background: #f5f8f9;
    border-right: 1px solid #dbe6e9;
    font-size: 9.600px;
    color: #6c868e;
}
.group input {
    flex: 1;
    min-width: 0;
    border: 0;
    padding: 0 0 0 14px;
    background: #fff;
    font-family: "Open Sans", sans-serif;
    font-size: 9.600px;
    color: #6c868e;
    outline: 0;
}
.group input:disabled {
    background: #eeeeee;
}

.zone {
    height: 37px;
    display: flex;
    align-items: center;
    padding-left: 6px;
    border-bottom: 1px solid #e8eef0;
}
.zone-name {
    width: 176px;
    flex: none;
    margin-top: -4px;
    font-size: 9.600px;
    font-weight: 700;
    color: #6a6e72;
}
.zone.all .zone-name {
    margin-top: 0;
    font-weight: 400;
    color: #8a9499;
}
.zone input[type="checkbox"] {
    width: 18px;
    height: 18px;
    flex: none;
    margin: 0 11px 0 0;
    accent-color: #0a6fe8;
}
.zone .group {
    width: 96px;
    height: 31px;
    margin-right: 11px;
    border: 1px solid #bbcdd2;
}
.zone .group span {
    width: 32px;
    border-right: 1px solid #bbcdd2;
}
```
